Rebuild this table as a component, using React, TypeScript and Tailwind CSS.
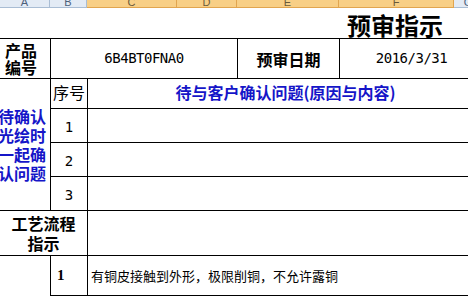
const cjk = "font-['Noto_Sans_CJK_SC',sans-serif]";
const mono = "font-['DejaVu_Sans_Mono',monospace]";

const colHeads = [
  { label: 'A', sel: false },
  { label: 'B', sel: false },
  { label: 'C', sel: true },
  { label: 'D', sel: true },
  { label: 'E', sel: true },
  { label: 'F', sel: true },
  { label: 'G', sel: false },
];

const blueLines = ['待确认', '光绘时', '一起确', '认问题'];

export default function App() {
  return (
    <div className="w-[468px] h-[296px] overflow-hidden bg-white text-black">
      <div className="grid w-[483px] grid-cols-[50px_37px_90px_60px_102px_115px_29px] grid-rows-[8px_30px_40px_30px_34px_34px_34px_45px_41px]">
        {/* column headers */}
        {colHeads.map((c) => (
          <div
            key={c.label}
            className={
              c.sel
                ? 'flex items-end justify-center overflow-hidden border-r border-b border-[#e1a54f] bg-[#f8cf86] text-[#6b5a3a]'
                : 'flex items-end justify-center overflow-hidden border-r border-b border-[#a9bdd4] bg-[#e3ebf5] text-[#4c607a]'
            }
          >
            <span className="font-['Liberation_Sans',sans-serif] text-[11px] leading-[11px] mb-[-1px]">{c.label}</span>
          </div>
        ))}

        {/* title row */}
        <div className="col-span-5" />
        <div className={`col-span-2 flex items-center pl-[8px] pt-[4px] ${cjk}`}>
          <span className="text-[24px] font-bold leading-none">预审指示</span>
        </div>

        {/* product row */}
        <div className={`border-t border-black flex flex-col justify-center pl-[5px] text-[16px] font-bold leading-[17px] ${cjk}`}>
          <span>产品</span>
          <span>编号</span>
        </div>
        <div className={`col-span-3 border-t border-l border-black flex items-center justify-center text-[14px] tracking-[-0.5px] ${mono}`}>
          6B4BT0FNA0
        </div>
        <div className={`border-t border-l border-black flex items-center justify-center text-[16px] font-bold ${cjk}`}>
          预审日期
        </div>
        <div className={`col-span-2 border-t border-l border-black flex items-center justify-center text-[14px] tracking-[-0.5px] ${mono}`}>
          2016/3/31
        </div>

        {/* question header row */}
        <div className={`row-span-4 border-t border-black flex flex-col justify-center items-end pr-[4px] overflow-hidden text-[16px] font-bold leading-[19px] text-[#1515c8] ${cjk}`}>
          {blueLines.map((l) => (
            <span key={l} className="whitespace-nowrap">{l}</span>
          ))}
        </div>
        <div className={`border-t border-l border-black flex items-center justify-center pb-[3px] text-[16px] ${cjk}`}>
          序号
        </div>
        <div className={`col-span-5 border-t border-l border-black flex items-center justify-center pb-[3px] text-[16px] font-bold text-[#1515c8] ${cjk}`}>
          待与客户确认问题(原因与内容)
        </div>

        {[1, 2, 3].map((n) => (
          <div key={n} className="contents">
            <div className={`border-t border-l border-black flex items-center justify-center pt-[3px] text-[14px] ${mono}`}>
              {n}
            </div>
            <div className="col-span-5 border-t border-l border-black" />
          </div>
        ))}

        {/* process row */}
        <div className={`col-span-2 border-t border-black flex flex-col items-center justify-center text-[16px] font-bold leading-[20px] ${cjk}`}>
          <span>工艺流程</span>
          <span>指示</span>
        </div>
        <div className="col-span-5 border-t border-l border-black" />

        {/* instruction row */}
        <div className="border-t border-black" />
        <div className="border-t border-l border-b border-black flex items-center pl-[6px] font-['Liberation_Serif',serif] text-[15px] font-bold">
          1
        </div>
        <div className={`col-span-5 border-t border-l border-b border-black flex items-center pl-[3px] text-[13px] ${cjk}`}>
          有铜皮接触到外形，极限削铜，不允许露铜
        </div>
      </div>
    </div>
  );
}
